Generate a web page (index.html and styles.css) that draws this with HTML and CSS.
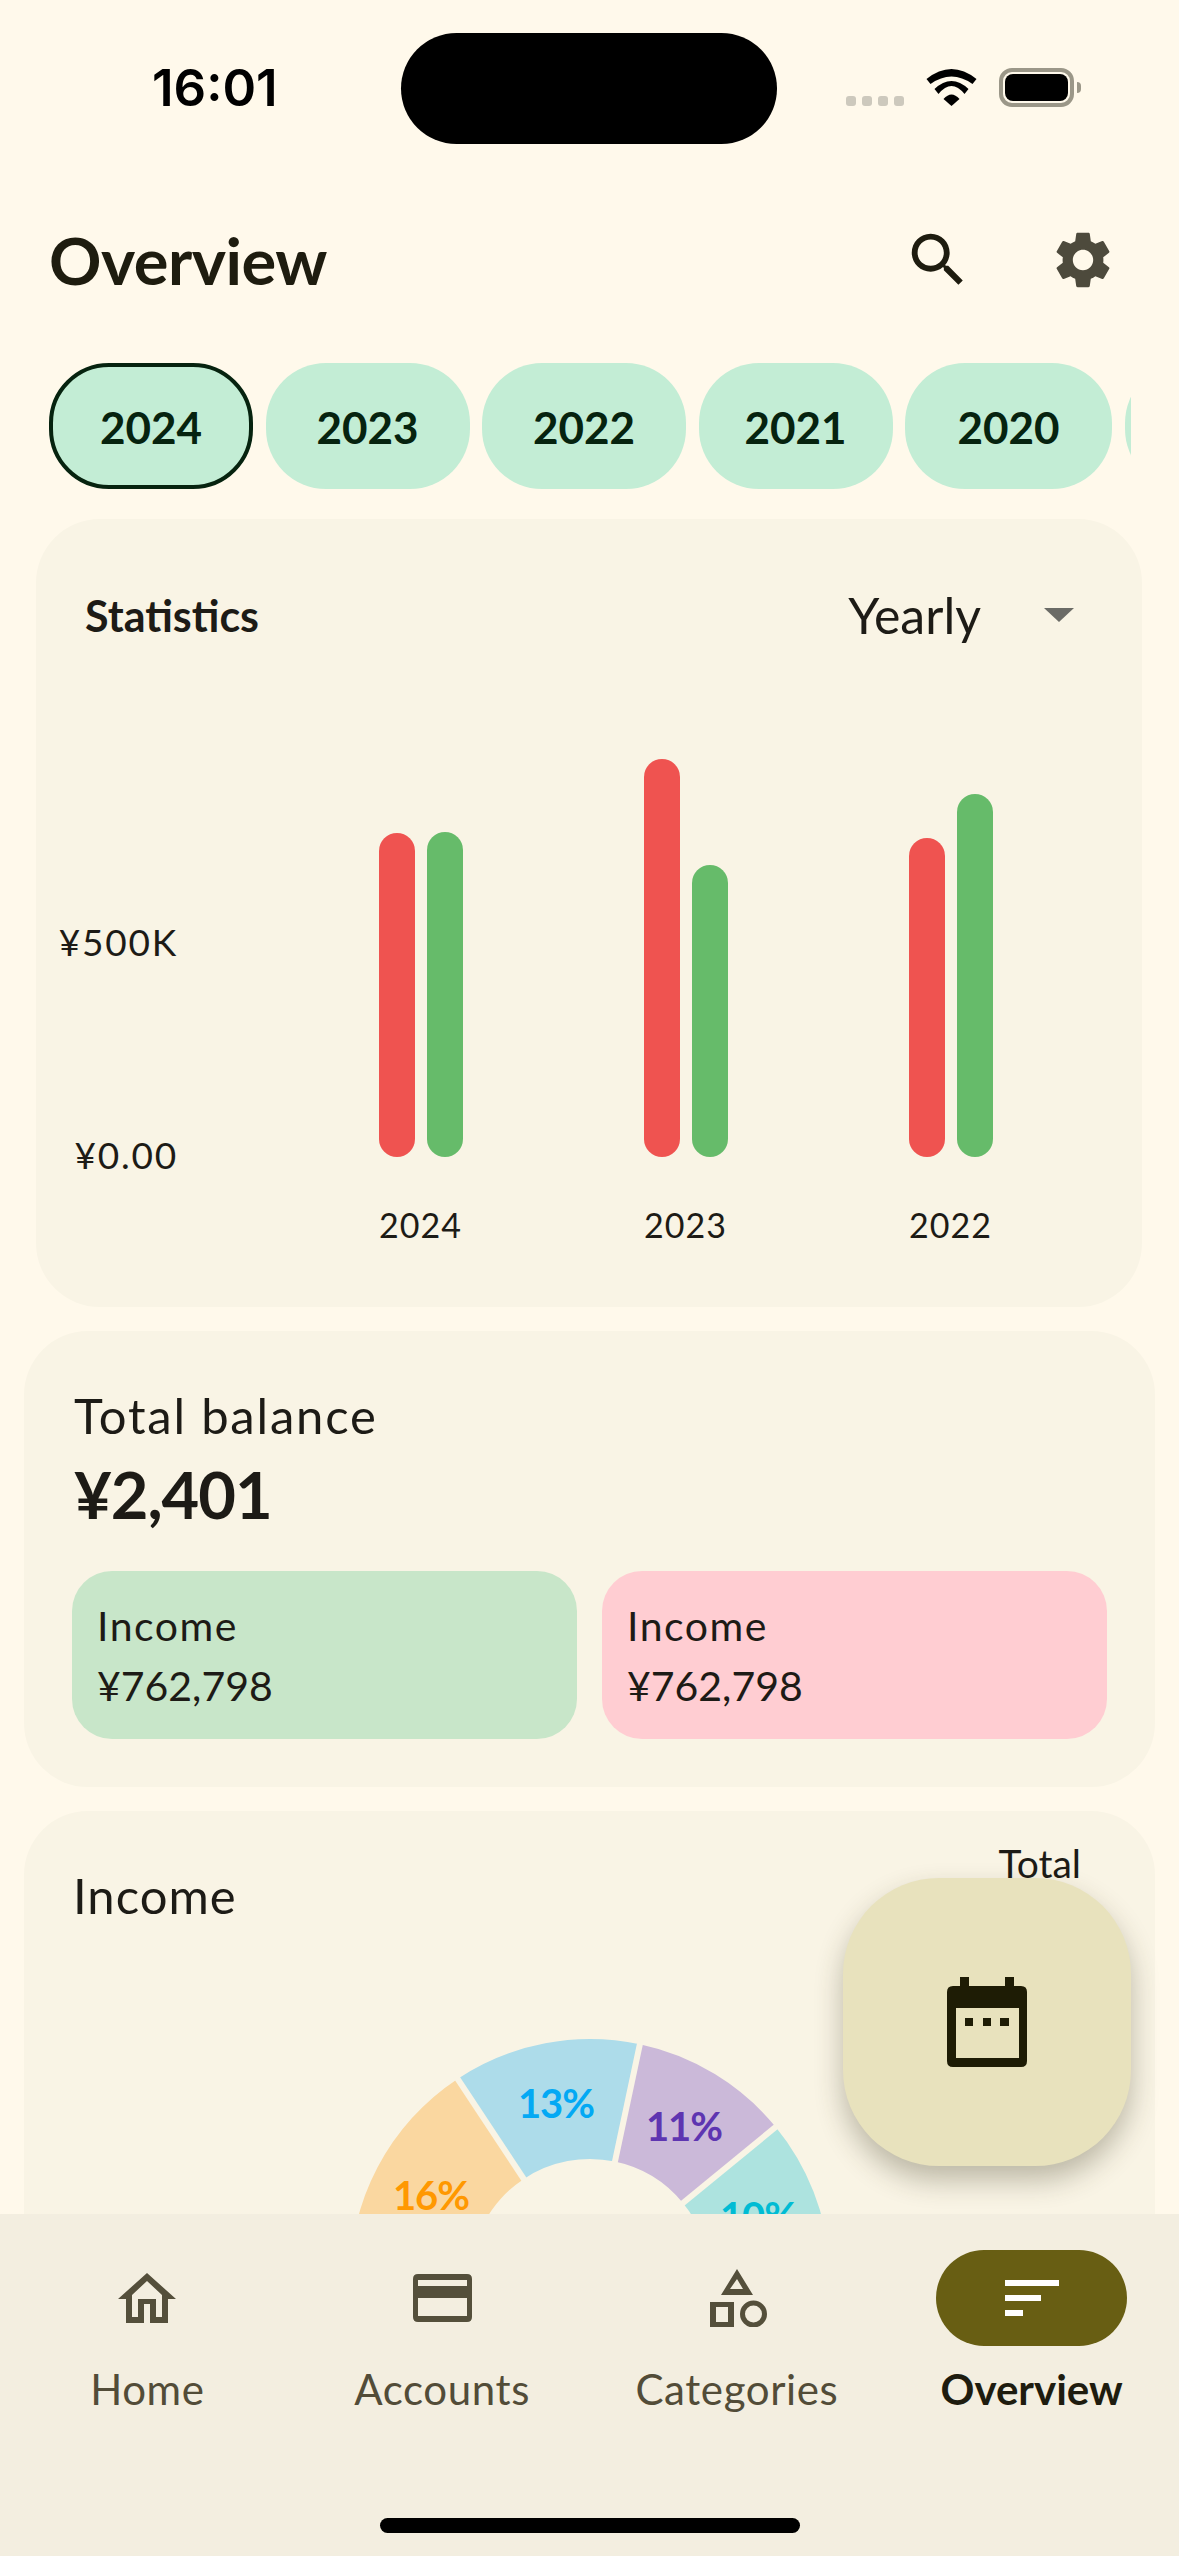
FILE: index.html
```html
<!DOCTYPE html>
<html lang="en">
<head>
  <meta charset="UTF-8" />
  <meta name="viewport" content="width=device-width, initial-scale=1.0"/>
  <title>Overview</title>
  <link rel="stylesheet" href="styles.css">
</head>
<body>

  <div class="phone">

    <div class="status-bar">
      <span class="time">16:01</span>
      <div class="island"></div>
      <div class="status-icons">
        <div class="signal"><i></i><i></i><i></i><i></i></div>
        <svg class="wifi" viewBox="0 0 50 37">
          <path d="M0 10Q25-10 50 10L46 15Q25 0 4 15Z"/>
          <path d="M8 20Q25 4 42 20L38 25Q25 9 12 25Z"/>
          <path d="M17 30Q25 21 33 30L25 37Z"/>
        </svg>
        <div class="battery"><div class="battery-fill"></div></div>
        <div class="battery-nub"></div>
      </div>
    </div>

    <header class="topbar">
      <h1>Overview</h1>
      <div class="topbar-actions">
        <svg class="icon-search" viewBox="0 0 24 24"><path d="M15.5 14h-.79l-.28-.27C15.41 12.59 16 11.11 16 9.5 16 5.91 13.09 3 9.5 3S3 5.91 3 9.5 5.91 16 9.5 16c1.61 0 3.09-.59 4.23-1.57l.27.28v.79l5 4.99L20.49 19l-4.99-5zm-6 0C7.01 14 5 11.99 5 9.5S7.01 5 9.5 5 14 7.01 14 9.5 11.99 14 9.5 14z"/></svg>
        <svg class="icon-gear" viewBox="0 0 24 24"><path d="M19.14 12.94c.04-.3.06-.61.06-.94 0-.32-.02-.64-.07-.94l2.03-1.58c.18-.14.23-.41.12-.61l-1.92-3.32c-.12-.22-.37-.29-.59-.22l-2.39.96c-.5-.38-1.03-.7-1.62-.94l-.36-2.54c-.04-.24-.24-.41-.48-.41h-3.84c-.24 0-.43.17-.47.41l-.36 2.54c-.59.24-1.13.57-1.62.94l-2.39-.96c-.22-.08-.47 0-.59.22L2.74 8.87c-.12.21-.08.47.12.61l2.03 1.58c-.05.3-.09.63-.09.94s.02.64.07.94l-2.03 1.58c-.18.14-.23.41-.12.61l1.92 3.32c.12.22.37.29.59.22l2.39-.96c.5.38 1.03.7 1.62.94l.36 2.54c.05.24.24.41.48.41h3.84c.24 0 .44-.17.47-.41l.36-2.54c.59-.24 1.13-.56 1.62-.94l2.39.96c.22.08.47 0 .59-.22l1.92-3.32c.12-.22.07-.47-.12-.61l-2.01-1.58zM12 15.6c-1.98 0-3.6-1.62-3.6-3.6s1.62-3.6 3.6-3.6 3.6 1.62 3.6 3.6-1.62 3.6-3.6 3.6z"/></svg>
      </div>
    </header>

    <div class="chips">
      <div class="chip chip-selected">2024</div>
      <div class="chip">2023</div>
      <div class="chip">2022</div>
      <div class="chip chip-narrow">2021</div>
      <div class="chip chip-wide">2020</div>
      <div class="chip"></div>
    </div>

    <section class="card stats-card">
      <div class="stats-head">
        <span class="stats-title">Statistics</span>
        <div class="period">
          <span>Yearly</span>
          <div class="caret"></div>
        </div>
      </div>
      <div class="chart">
        <div class="y-axis">
          <span>¥500K</span>
          <span>¥0.00</span>
        </div>
        <div class="plot">
          <div class="group">
            <div class="bars">
              <div class="bar bar-red" style="height: 324px"></div>
              <div class="bar bar-green" style="height: 325px"></div>
            </div>
            <span class="group-label">2024</span>
          </div>
          <div class="group">
            <div class="bars">
              <div class="bar bar-red" style="height: 398px"></div>
              <div class="bar bar-green" style="height: 292px"></div>
            </div>
            <span class="group-label">2023</span>
          </div>
          <div class="group">
            <div class="bars">
              <div class="bar bar-red" style="height: 319px"></div>
              <div class="bar bar-green" style="height: 363px"></div>
            </div>
            <span class="group-label">2022</span>
          </div>
        </div>
      </div>
    </section>

    <section class="card balance-card">
      <div class="balance-label">Total balance</div>
      <div class="balance-value">¥2,401</div>
      <div class="balance-row">
        <div class="mini mini-green">
          <div class="mini-label">Income</div>
          <div>¥762,798</div>
        </div>
        <div class="mini mini-pink">
          <div class="mini-label">Income</div>
          <div>¥762,798</div>
        </div>
      </div>
    </section>

    <section class="card income-card">
      <div class="income-head">
        <span class="income-title">Income</span>
        <span class="income-total">Total</span>
      </div>
      <svg class="donut" viewBox="0 0 480 480">
        <path fill="#fad7a0" d="M0 244.2A240 240 0 0 1 107.5 39.9L173.8 139.9A120 120 0 0 0 120 242.1Z"/>
        <path fill="#addcea" d="M107.5 39.9A240 240 0 0 1 289.9 5.3L264.9 122.6A120 120 0 0 0 173.8 139.9Z"/>
        <path fill="#cbb9d9" d="M289.9 5.3A240 240 0 0 1 425.7 88L332.9 164A120 120 0 0 0 264.9 122.6Z"/>
        <path fill="#ade3df" d="M425.7 88A240 240 0 0 1 479.6 226.2L359.8 233.1A120 120 0 0 0 332.9 164Z"/>
        <line class="slice-gap" x1="176.500" y1="144.100" x2="104.800" y2="35.700"/>
        <line class="slice-gap" x1="263.900" y1="127.500" x2="290.900" y2="0.400"/>
        <line class="slice-gap" x1="329" y1="167.200" x2="429.600" y2="84.800"/>
        <text class="pct" x="81" y="171" fill="#ff9800">16%</text>
        <text class="pct" x="206" y="79" fill="#03a9f4">13%</text>
        <text class="pct" x="334" y="102" fill="#5e35b1">11%</text>
        <text class="pct" x="408" y="192" fill="#00bcd4">10%</text>
      </svg>
    </section>

    <button class="fab">
      <svg viewBox="0 0 80 90" class="icon-calendar">
        <path fill-rule="evenodd" d="M13 0H22V9H58V0H67V9H74Q80 9 80 15V84Q80 90 74 90H6Q0 90 0 84V15Q0 9 6 9H13ZM9 31V81H72V31Z"/>
        <rect x="18" y="41" width="8" height="8"/>
        <rect x="36" y="41" width="8" height="8"/>
        <rect x="53" y="41" width="9" height="8"/>
      </svg>
    </button>

    <nav class="navbar">
      <div class="tabs">
        <div class="tab">
          <div class="tab-icon">
            <svg class="icon-home" viewBox="0 0 60 50"><path fill-rule="evenodd" d="M30 0L59 26H51V50H33V31H27V50H9V26H1ZM30 8L15 22V44H21V26H39V44H45V22Z"/></svg>
          </div>
          <span>Home</span>
        </div>
        <div class="tab">
          <div class="tab-icon">
            <svg class="icon-card" viewBox="0 0 59 48"><path fill-rule="evenodd" d="M5 0H54Q59 0 59 5V43Q59 48 54 48H5Q0 48 0 43V5Q0 0 5 0ZM5 6V12H54V6ZM5 24V42H54V24Z"/></svg>
          </div>
          <span>Accounts</span>
        </div>
        <div class="tab">
          <div class="tab-icon">
            <svg class="icon-shapes" viewBox="0 0 57 58">
              <path fill-rule="evenodd" d="M27 0L43 26H11ZM27 10L20 20H33Z"/>
              <path fill-rule="evenodd" d="M0 33H24V58H0ZM6 38V53H18V38Z"/>
              <circle cx="43.500" cy="45" r="11" fill="none" stroke="#544f3b" stroke-width="5"/>
            </svg>
          </div>
          <span>Categories</span>
        </div>
        <div class="tab tab-active">
          <div class="tab-icon">
            <svg class="icon-sort" viewBox="0 0 54 36"><path d="M0 0H54V6H0ZM0 15H36V21H0ZM0 30H18V36H0Z"/></svg>
          </div>
          <span>Overview</span>
        </div>
      </div>
      <div class="home-indicator"></div>
    </nav>

  </div>

</body>
</html>
```

FILE: styles.css
```css
* {
  box-sizing: border-box;
}

body {
  margin: 0;
  background: #fff9eb;
  font-family: 'Lato', 'Open Sans', sans-serif;
  color: #1d1b16;
}

.phone {
  position: relative;
  width: 1179px;
  height: 2556px;
  overflow: hidden;
  background: #fff9eb;
}

/* status bar */
.status-bar {
  display: flex;
  height: 180px;
  padding: 33px 98px 0 152px;
  justify-content: space-between;
  align-items: flex-start;
}

.time {
  margin-top: 25px;
  font-family: 'Inter', sans-serif;
  font-size: 51px;
  line-height: 60px;
  font-weight: 600;
  color: #000;
}

.island {
  width: 376px;
  height: 111px;
  margin-left: 54px;
  background: #000;
  border-radius: 56px;
}

.status-icons {
  display: flex;
  align-items: flex-start;
  margin-top: 35px;
}

.signal {
  display: flex;
  gap: 6px;
  margin-top: 28px;
}

.signal i {
  width: 10px;
  height: 10px;
  border-radius: 3px;
  background: #cdc9bd;
}

.wifi {
  width: 51px;
  height: 37px;
  margin: 1px 22px 0;
}

.battery {
  width: 75px;
  height: 39px;
  padding: 2px;
  border: 4px solid #9b9788;
  border-radius: 13px;
}

.battery-fill {
  height: 100%;
  background: #000;
  border-radius: 8px;
}

.battery-nub {
  width: 4px;
  height: 11px;
  margin: 14px 0 0 3px;
  background: #9b9788;
  border-radius: 0 4px 4px 0;
}

/* title row */
.topbar {
  display: flex;
  height: 160px;
  padding: 0 62px 0 49px;
  justify-content: space-between;
  align-items: center;
}

.topbar h1 {
  margin: 0;
  font-size: 65px;
  letter-spacing: -0.5px;
  font-weight: 700;
  color: #1e1c0f;
}

.topbar-actions {
  display: flex;
  align-items: center;
  gap: 76px;
}

.icon-search {
  width: 70px;
  height: 70px;
  fill: #1e1c0f;
}

.icon-gear {
  width: 68px;
  height: 68px;
  fill: #4d4a3c;
}

/* year chips */
.chips {
  display: flex;
  gap: 12.5px;
  width: 1131px;
  margin-top: 23px;
  padding-left: 49px;
  overflow: hidden;
}

.chip {
  flex: none;
  display: flex;
  width: 204px;
  height: 126px;
  padding-top: 2px;
  justify-content: center;
  align-items: center;
  background: #c3edd5;
  border-radius: 60px;
  font-size: 44px;
  font-weight: 700;
  color: #06230f;
}

.chip-selected {
  border: 4px solid #06230f;
}

.chip-narrow {
  width: 194px;
}

.chip-wide {
  width: 207px;
}

/* cards */
.card {
  background: #f9f4e5;
  border-radius: 64px;
}

.stats-card {
  height: 788px;
  margin: 30px 37px 0 36px;
  padding-top: 66px;
}

.stats-head {
  display: flex;
  height: 60px;
  padding: 0 68px 0 49px;
  justify-content: space-between;
  align-items: center;
}

.stats-title {
  font-size: 43px;
  font-weight: 700;
}

.period {
  display: flex;
  align-items: center;
  gap: 63px;
  font-size: 50px;
}

.caret {
  width: 0;
  height: 0;
  border-left: 15px solid transparent;
  border-right: 15px solid transparent;
  border-top: 14px solid #6b6b66;
}

.chart {
  display: flex;
  margin-top: 100px;
}

.y-axis {
  display: flex;
  flex-direction: column;
  justify-content: flex-end;
  gap: 173px;
  width: 142px;
  height: 412px;
  transform: translateY(18px);
  text-align: right;
  font-size: 37px;
  letter-spacing: 1.8px;
  line-height: 40px;
}

.plot {
  display: grid;
  grid-template-columns: repeat(3, 265px);
  margin-left: 110px;
}

.group {
  display: flex;
  flex-direction: column;
  align-items: center;
}

.bars {
  display: flex;
  height: 412px;
  gap: 12px;
  align-items: flex-end;
}

.bar {
  width: 36px;
  border-radius: 18px;
}

.bar-red {
  background: #ef5350;
}

.bar-green {
  background: #66bb6a;
}

.group-label {
  margin-top: 48px;
  font-size: 34px;
  letter-spacing: 1px;
  line-height: 40px;
}

.balance-card {
  height: 456px;
  margin: 24px 24px 0;
  padding: 54px 48px 0;
}

.balance-label {
  padding-left: 2px;
  font-size: 49px;
  letter-spacing: 1.8px;
  line-height: 60px;
}

.balance-value {
  padding-left: 2px;
  margin-top: 9px;
  font-size: 65px;
  letter-spacing: -1px;
  line-height: 80px;
  font-weight: 700;
}

.balance-row {
  display: flex;
  gap: 25px;
  margin-top: 37px;
}

.mini {
  flex: 1;
  height: 168px;
  padding: 25px 25px;
  border-radius: 40px;
  font-size: 41px;
  line-height: 60px;
}

.mini-label {
  letter-spacing: 1.5px;
}

.mini-green {
  background: #c8e6c9;
}

.mini-pink {
  background: #ffcdd2;
}

.income-card {
  height: 800px;
  margin: 24px 24px 0;
}

.income-head {
  display: flex;
  height: 228px;
  padding: 27px 74px 0 49px;
  justify-content: space-between;
  align-items: flex-start;
}

.income-title {
  margin-top: 27px;
  font-size: 49px;
  letter-spacing: 1px;
  line-height: 60px;
}

.income-total {
  font-size: 39px;
  line-height: 50px;
}

.donut {
  display: block;
  width: 480px;
  height: 480px;
  margin: 0 auto;
  overflow: visible;
}

.slice-gap {
  stroke: #f9f4e5;
  stroke-width: 6;
}

.pct {
  font-size: 40px;
  letter-spacing: -1px;
  font-weight: 700;
  text-anchor: middle;
}

/* floating button */
.fab {
  position: absolute;
  right: 48px;
  bottom: 390px;
  display: flex;
  width: 288px;
  height: 288px;
  padding: 0;
  justify-content: center;
  align-items: center;
  border: none;
  border-radius: 96px;
  background: #e8e2bd;
  box-shadow: 0 14px 28px rgba(60, 55, 30, 0.32);
}

.icon-calendar {
  width: 80px;
  height: 90px;
  fill: #1e1c05;
}

/* bottom navigation */
.navbar {
  position: absolute;
  left: 0;
  right: 0;
  bottom: 0;
  display: flex;
  flex-direction: column;
  height: 342px;
  padding-top: 36px;
  background: #f3eee0;
}

.tabs {
  display: flex;
}

.tab {
  flex: 1;
  display: flex;
  flex-direction: column;
  align-items: center;
  font-size: 42px;
  letter-spacing: 0.6px;
  line-height: 50px;
  color: #524c38;
}

.tab span {
  margin-top: 18px;
}

.tab-icon {
  display: flex;
  width: 191px;
  height: 96px;
  justify-content: center;
  align-items: center;
  border-radius: 48px;
  fill: #544f3b;
}

.tab-active {
  letter-spacing: 0;
  font-weight: 700;
  color: #1e1c0f;
}

.tab-active .tab-icon {
  background: #685e13;
  fill: #fff;
}

.icon-home {
  width: 60px;
  height: 50px;
}

.icon-card {
  width: 59px;
  height: 48px;
}

.icon-shapes {
  width: 57px;
  height: 58px;
  margin-left: 3px;
}

.icon-sort {
  width: 54px;
  height: 36px;
}

.home-indicator {
  width: 420px;
  height: 15px;
  margin: auto auto 23px;
  background: #000;
  border-radius: 8px;
}
```
